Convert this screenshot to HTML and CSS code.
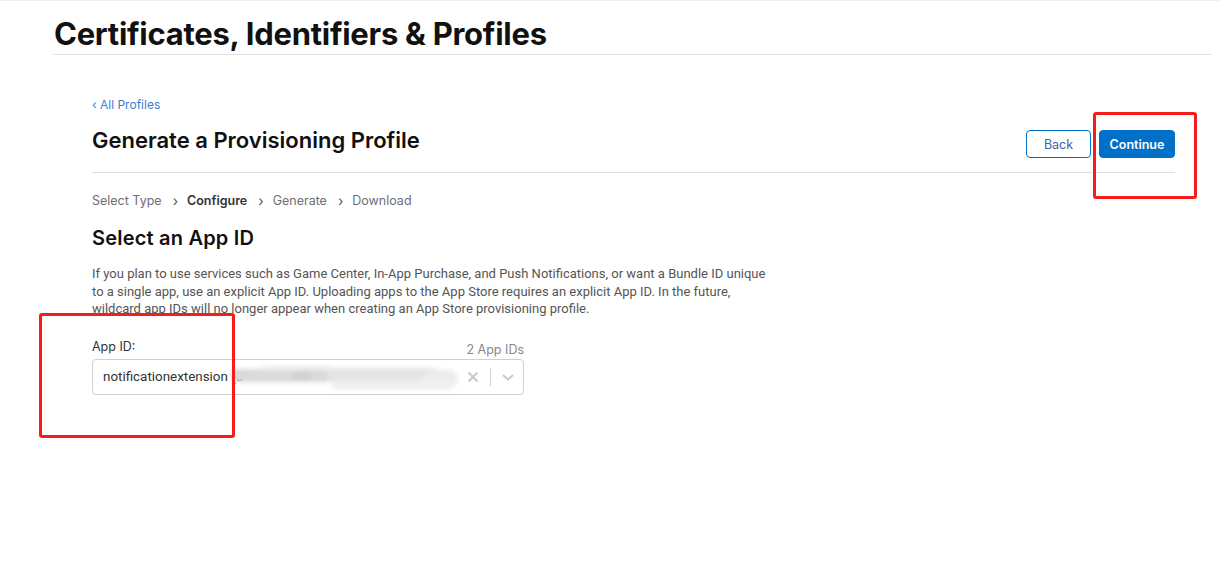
FILE: index.html
```html
<!DOCTYPE html>
<html lang="en">
<head>
<meta charset="utf-8">
<title>Certificates, Identifiers &amp; Profiles</title>
<link rel="stylesheet" href="styles.css">
</head>
<body>
<header class="top">
  <h1 class="top-title">Certificates, Identifiers &amp; Profiles</h1>
</header>
<main class="main">
  <a class="back-link" href="#">‹ All Profiles</a>
  <div class="page-head">
    <h2 class="page-title">Generate a Provisioning Profile</h2>
    <div class="actions">
      <button class="btn btn-outline">Back</button>
      <button class="btn btn-primary">Continue</button>
    </div>
  </div>
  <nav class="steps">
    <span class="step">Select Type</span>
    <span class="sep">›</span>
    <span class="step active">Configure</span>
    <span class="sep">›</span>
    <span class="step">Generate</span>
    <span class="sep">›</span>
    <span class="step">Download</span>
  </nav>
  <h3 class="section-title">Select an App ID</h3>
  <p class="desc">If you plan to use services such as Game Center, In-App Purchase, and Push Notifications, or want a Bundle ID unique to a single app, use an explicit App ID. Uploading apps to the App Store requires an explicit App ID. In the future, wildcard app IDs will no longer appear when creating an App Store provisioning profile.</p>
  <div class="field">
    <div class="field-head">
      <label class="field-label">App ID:</label>
      <span class="field-count">2 App IDs</span>
    </div>
    <div class="select">
      <span class="select-value">notificationextension (8</span>
      <span class="smear"><i></i><i></i><i></i><i></i><i></i><i></i></span>
      <span class="select-icons">
        <svg class="ic-x" width="12" height="12" viewBox="0 0 12 12"><path d="M1.5 1.5L10.5 10.5M10.5 1.5L1.5 10.5" stroke="#c8c8c8" stroke-width="2" fill="none"/></svg>
        <span class="vsep"></span>
        <svg class="ic-chev" width="14" height="10" viewBox="0 0 14 10"><path d="M2 3L7 7.5L12 3" stroke="#c8c8c8" stroke-width="1.8" fill="none"/></svg>
      </span>
    </div>
  </div>
</main>
<div class="mark mark-1"></div>
<div class="mark mark-2"></div>
</body>
</html>
```
FILE: styles.css
```css
* { box-sizing: border-box; }
html, body { margin: 0; padding: 0; background: #fff; }
body {
  font-family: "Inter", "Noto Sans", sans-serif;
  color: #1d1d1f;
  border-top: 1px solid #f0f0f0;
  width: 1219px;
  height: 578px;
  position: relative;
  overflow: hidden;
}
.top {
  margin: 0 7px 0 53px;
  border-bottom: 1px solid #e2e2e2;
  height: 54px;
}
.top-title {
  margin: 0;
  padding: 14px 0 0 1px;
  font-size: 31px;
  font-weight: 700;
  line-height: 38px;
  letter-spacing: -0.27px;
  color: #111;
}
.main {
  margin: 0 44px 0 92px;
  padding-top: 42px;
}
.back-link {
  display: block;
  font-size: 12px;
  line-height: 16px;
  color: #3b7ed6;
  text-decoration: none;
}
.page-head {
  display: flex;
  justify-content: space-between;
  align-items: flex-start;
  border-bottom: 1px solid #dedede;
  padding: 13px 0 14px;
}
.page-title {
  margin: 0;
  font-size: 22px;
  font-weight: 600;
  line-height: 28px;
  color: #111;
}
.actions { display: flex; gap: 8px; margin-top: 4px; }
.btn {
  font-family: inherit;
  font-size: 12.5px;
  height: 28px;
  border-radius: 4px;
  padding: 0 12px;
  cursor: pointer;
}
.btn-outline {
  background: #fff;
  border: 1px solid #0070c9;
  color: #4a5bb5;
  width: 65px;
}
.btn-primary {
  background: #0070c9;
  border: 1px solid #0070c9;
  color: #fff;
  font-weight: 600;
  width: 76px;
  padding: 0;
}
.steps {
  display: flex;
  align-items: center;
  font-size: 12.5px;
  color: #6e6e73;
  margin-top: 20px;
  line-height: 16px;
}
.sep { margin: 0 9px 0 11px; font-size: 14px; color: #555; }
.step.active { font-weight: 600; color: #333; }
.section-title {
  margin: 16px 0 0;
  font-size: 20px;
  font-weight: 600;
  line-height: 26px;
  color: #111;
  letter-spacing: 0.2px;
}
.desc {
  margin: 14px 0 0;
  width: 685px;
  font-family: "Roboto", "Inter", sans-serif;
  font-size: 13px;
  line-height: 17.5px;
  color: #555;
}
.field { width: 432px; margin-top: 21px; }
.field-head {
  display: flex;
  justify-content: space-between;
  align-items: flex-end;
  font-size: 12.5px;
  line-height: 16px;
}
.field-label { color: #333; }
.field-count { color: #888; position: relative; top: 3px; }
.select {
  position: relative;
  margin-top: 4px;
  height: 36px;
  border: 1px solid #cfcfcf;
  border-radius: 4px;
  display: flex;
  align-items: center;
  padding-left: 10px;
  font-family: "Roboto", "Inter", sans-serif;
  font-size: 13.4px;
  color: #333;
}
.select-value { white-space: nowrap; }
.smear {
  position: absolute;
  left: 139px;
  top: 2px;
  width: 226px;
  height: 32px;
  filter: blur(2px);
}
.smear i {
  position: absolute;
  display: block;
  background: #e2e2e2;
  border-radius: 4px;
}
.smear i:nth-child(1) { left: 0; top: 7px; width: 100px; height: 13px; background: #dadada; }
.smear i:nth-child(2) { left: 95px; top: 6px; width: 110px; height: 14px; background: #e4e4e4; }
.smear i:nth-child(3) { left: 190px; top: 8px; width: 36px; height: 18px; background: #ececec; border-radius: 10px; }
.smear i:nth-child(4) { left: 100px; top: 18px; width: 120px; height: 10px; background: #f0f0f0; }
.smear i:nth-child(5) { left: 30px; top: 4px; width: 70px; height: 5px; background: #ebebeb; }
.smear i:nth-child(6) { left: 60px; top: 9px; width: 20px; height: 10px; background: #d2d2d2; }
.select-icons {
  margin-left: auto;
  display: flex;
  align-items: center;
  height: 100%;
}
.ic-x { margin-right: 11px; }
.vsep { width: 1px; height: 18px; background: #d0d0d0; }
.ic-chev { margin: 0 8px 0 10px; }
.mark {
  position: absolute;
  border: 3px solid #f51c1c;
  border-radius: 3px;
}
.mark-1 { left: 1093px; top: 111px; width: 104px; height: 87px; }
.mark-2 { left: 39px; top: 312px; width: 196px; height: 125px; }
```
